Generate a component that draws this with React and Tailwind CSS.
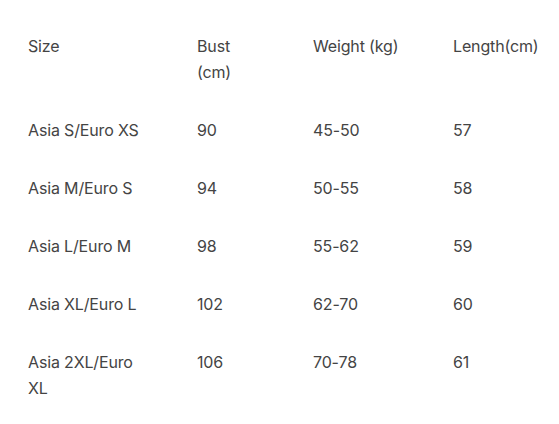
export default function App() {
  const rows = [
    ["Asia S/Euro XS", "90", "45-50", "57"],
    ["Asia M/Euro S", "94", "50-55", "58"],
    ["Asia L/Euro M", "98", "55-62", "59"],
    ["Asia XL/Euro L", "102", "62-70", "60"],
    [<>Asia 2XL/Euro<br />XL</>, "106", "70-78", "61"],
  ];
  return (
    <div className="w-[559px] h-[424px] bg-white pt-[17px] pl-[12px] overflow-hidden font-['Inter',sans-serif] text-[16px] leading-[26px] tracking-[-0.15px] text-[#444444]">
      <table className="border-collapse table-fixed w-[547px]">
        <colgroup>
          <col className="w-[169px]" />
          <col className="w-[116px]" />
          <col className="w-[140px]" />
          <col className="w-[122px]" />
        </colgroup>
        <thead>
          <tr>
            <th className="px-4 py-4 text-left font-normal align-top">Size</th>
            <th className="px-4 py-4 text-left font-normal align-top">Bust<br />(cm)</th>
            <th className="px-4 py-4 text-left font-normal align-top whitespace-nowrap">Weight (kg)</th>
            <th className="px-4 py-4 text-left font-normal align-top whitespace-nowrap">Length(cm)</th>
          </tr>
        </thead>
        <tbody>
          {rows.map((r, i) => (
            <tr key={i}>
              {r.map((c, j) => (
                <td key={j} className="px-4 py-4 align-top whitespace-nowrap">{c}</td>
              ))}
            </tr>
          ))}
        </tbody>
      </table>
    </div>
  );
}
